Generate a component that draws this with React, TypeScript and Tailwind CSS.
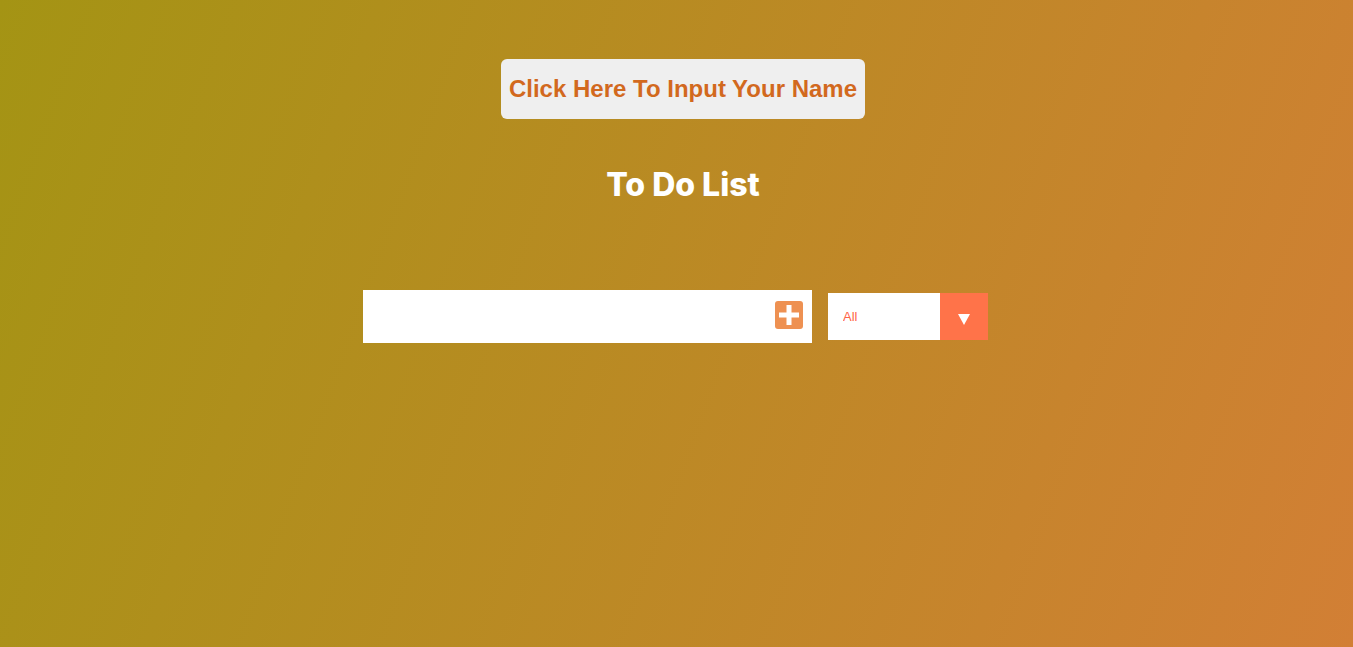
import { useState } from "react";

export default function App() {
  const [todo, setTodo] = useState("");
  const [filter, setFilter] = useState("all");

  return (
    <div className="min-h-screen w-full bg-[linear-gradient(110deg,#a49414_0%,#d27f35_100%)] flex flex-col items-center">
      {/* nombre del usuario */}
      <button className="mt-[59px] ml-[13px] h-[60px] px-2 rounded-md bg-[#efefef] text-[#d2691e] font-bold text-[24px] font-['Liberation_Sans',Arial,sans-serif]">
        Click Here To Input Your Name
      </button>

      <h1 className="mt-[46px] ml-[13px] text-white text-[32px] font-extrabold font-['Inter',sans-serif] leading-[40px]">
        To Do List
      </h1>

      {/* formulario */}
      <form
        className="mt-[85px] mr-[2px] flex items-center gap-4"
        onSubmit={(e) => e.preventDefault()}
      >
        <div className="w-[449px] h-[53px] bg-white flex items-center pr-[9px]">
          <input
            value={todo}
            onChange={(e) => setTodo(e.target.value)}
            className="flex-1 h-full px-4 outline-none text-[#333] font-['Liberation_Sans',sans-serif]"
          />
          <button type="submit" className="w-[28px] h-[28px] mb-[3px] flex items-center justify-center">
            <svg width="28" height="28" viewBox="0 0 28 28">
              <rect x="0" y="0" width="28" height="28" rx="3" fill="#ee9152" />
              <rect x="11.5" y="4" width="5" height="20" fill="#ffffff" />
              <rect x="4" y="11.5" width="20" height="5" fill="#ffffff" />
            </svg>
          </button>
        </div>

        <div className="relative w-[160px] h-[47px] bg-white flex">
          <select
            value={filter}
            onChange={(e) => setFilter(e.target.value)}
            className="appearance-none w-[112px] h-full pl-[15px] bg-white text-[#ff6347] text-[13px] outline-none font-['Liberation_Sans',sans-serif]"
          >
            <option value="all">All</option>
            <option value="completed">Completed</option>
            <option value="uncompleted">Uncompleted</option>
          </select>
          <div className="w-[48px] h-full bg-[#ff7349] flex items-center justify-center pt-[6px] pointer-events-none">
            <svg width="12" height="11" viewBox="0 0 12 11">
              <polygon points="0,0 12,0 6,11" fill="#ffffff" />
            </svg>
          </div>
        </div>
      </form>
    </div>
  );
}
